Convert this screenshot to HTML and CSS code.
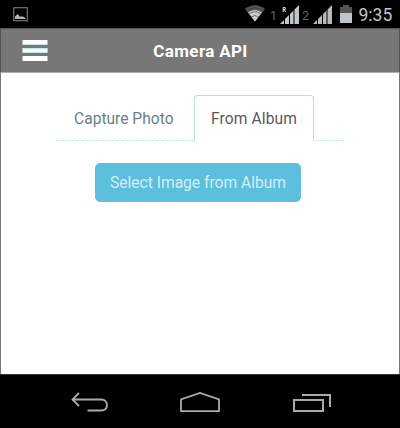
FILE: index.html
```html
<!DOCTYPE html>
<html lang="en">
<head>
<meta charset="utf-8">
<title>Camera API</title>
<link rel="stylesheet" href="styles.css">
</head>
<body>
<div class="phone">
  <div class="status">
    <svg class="picture" width="15" height="15" viewBox="0 0 15 15"><rect x=".75" y=".75" width="13.5" height="13" fill="none" stroke="#8c8c8c"/><path d="M2 12V9.500L3 8.500L5 7L6.500 9.500H10L12.500 11V12Z" fill="#b5b5b5"/></svg>
    <div class="signals">
      <svg width="20" height="17" viewBox="0 0 20 17"><path d="M0 4Q10-3.500 20 4L10 16.500Z" fill="#555"/><path d="M3 7.500Q10 2.500 17 7.500L10 16.500Z" fill="#c5cdcf"/><path d="M1.500 6Q10-.5 18.500 6M4 9Q10 4.500 16 9M6.200 12Q10 9 13.800 12" fill="none" stroke="#333" stroke-width=".6"/></svg>
      <span class="sim sim-one">1</span>
      <svg class="cell-one" width="19" height="19" viewBox="0 0 19 19"><path d="M0 19L4 15V19ZM5 14L9 10V19H5ZM10 9L13.500 5.500V19H10ZM14.500 4.500L19 0V19H14.500Z" fill="#c2c8ca"/><path d="M3.200 7V2.500H5.200V4.700H3.200M4.400 4.700L5.500 7" fill="none" stroke="#ddd"/></svg>
      <span class="sim sim-two">2</span>
      <svg class="cell-two" width="19" height="19" viewBox="0 0 19 19"><path d="M0 19L4 15V19ZM5 14L9 10V19H5ZM10 9L13.500 5.500V19H10ZM14.500 4.500L19 0V19H14.500Z" fill="#b7babb"/></svg>
      <svg class="battery" width="12" height="18" viewBox="0 0 12 18"><path d="M0 2H3V0H9V2H12V8H0Z" fill="#555"/><path d="M0 8H12V18H0Z" fill="#bdc5c8"/></svg>
      <span class="clock">9:35</span>
    </div>
  </div>
  <header class="header">
    <svg class="menu" width="26" height="21" viewBox="0 0 26 21"><path d="M.5 0H25.500V5H.5ZM.5 8H25.500V13H.5ZM.5 16H25.500V21H.5Z" fill="#fff"/><path d="M1 4.500H25M1 8.500H25M1 12.500H25" stroke="#c9e6ef"/></svg>
    <h1 class="title">Camera API</h1>
  </header>
  <main class="content">
    <nav class="tabs">
      <div class="tab">Capture Photo</div>
      <div class="tab active">From Album</div>
    </nav>
    <button class="select">Select Image from Album</button>
  </main>
  <footer class="system">
    <svg width="38" height="21" viewBox="0 0 38 21" fill="none" stroke="#aaa" stroke-width="1.800"><path d="M8 1L1.500 7.500L8 14M2 7.500H30C34.500 7.500 36 10.500 36 13C36 16 34 18.500 30 18.500H16.500"/></svg>
    <svg class="home" width="40" height="21" viewBox="0 0 40 21" fill="none" stroke="#aaa" stroke-width="1.800"><path d="M1 19.200V7.500L20 1L39 7.500V19.200Z"/></svg>
    <svg class="recent" width="38" height="20" viewBox="0 0 38 20" fill="none" stroke="#aaa" stroke-width="2"><path d="M1 7H30V18H1ZM9 2H37V14"/></svg>
  </footer>
</div>
</body>
</html>
```
FILE: styles.css
```css
* { box-sizing: border-box; }
body { margin: 0; background: #000; font-family: Roboto, sans-serif; }
.phone { width: 400px; height: 428px; display: flex; flex-direction: column; overflow: hidden; }
.status { height: 28px; flex: none; background: #000; display: flex; align-items: flex-start; justify-content: space-between; }
.picture { margin: 7px 0 0 13px; }
.signals { width: 155px; height: 28px; display: flex; align-items: flex-start; padding-top: 5px; }
.signals svg { flex: none; }
.sim { color: #626262; font-size: 12.5px; line-height: 15px; width: 8px; margin-top: 3px; }
.sim-one { margin-left: 5px; }
.cell-one { margin-left: 2px; }
.sim-two { margin-left: 3px; }
.cell-two { margin-left: 3px; }
.battery { margin-left: 8px; }
.clock { color: #c4c4c4; font-size: 17.500px; line-height: 21px; margin-left: 6.5px; }
.header { height: 45px; flex: none; background: #777; border: 1px solid #555; border-bottom-color: #adadad; display: flex; align-items: center; }
.menu { margin-left: 21px; flex: none; }
.title { width: 305px; margin: 0; text-align: center; color: #fff; font-size: 17px; line-height: 22px; font-weight: 700; letter-spacing: .35px; }
.content { flex: 1; background: #fff; border-left: 1px solid #777; border-right: 1px solid #777; display: flex; flex-direction: column; align-items: flex-start; padding: 22px 0 0 55px; }
.tabs { width: 288px; height: 46px; display: flex; border-bottom: 1px dashed #c0e3ec; }
.tab { width: 138px; height: 46px; padding: 14px 0 0 18px; color: #6b7f86; font-size: 15.600px; line-height: 21px; white-space: nowrap; }
.active { width: 120px; background: #fff; border: 1px solid #b9e0e9; border-bottom: 0; border-radius: 4px 4px 0 0; color: #5a5a5a; padding: 13px 0 0 16px; letter-spacing: .1px; }
.select { width: 206px; height: 39px; margin: 22px 0 0 39px; padding: 0; border: 1px solid #5bbfdd; border-radius: 5px; background: #5bbfdd; color: #d5eef5; font: 15.600px/22px Roboto, sans-serif; white-space: nowrap; }
.system { height: 54px; flex: none; background: #000; border-top: 1px solid #333; display: flex; align-items: flex-start; padding: 17px 0 0 71px; }
.home { margin-left: 71px; }
.recent { margin-left: 73px; margin-top: 1px; }
```
